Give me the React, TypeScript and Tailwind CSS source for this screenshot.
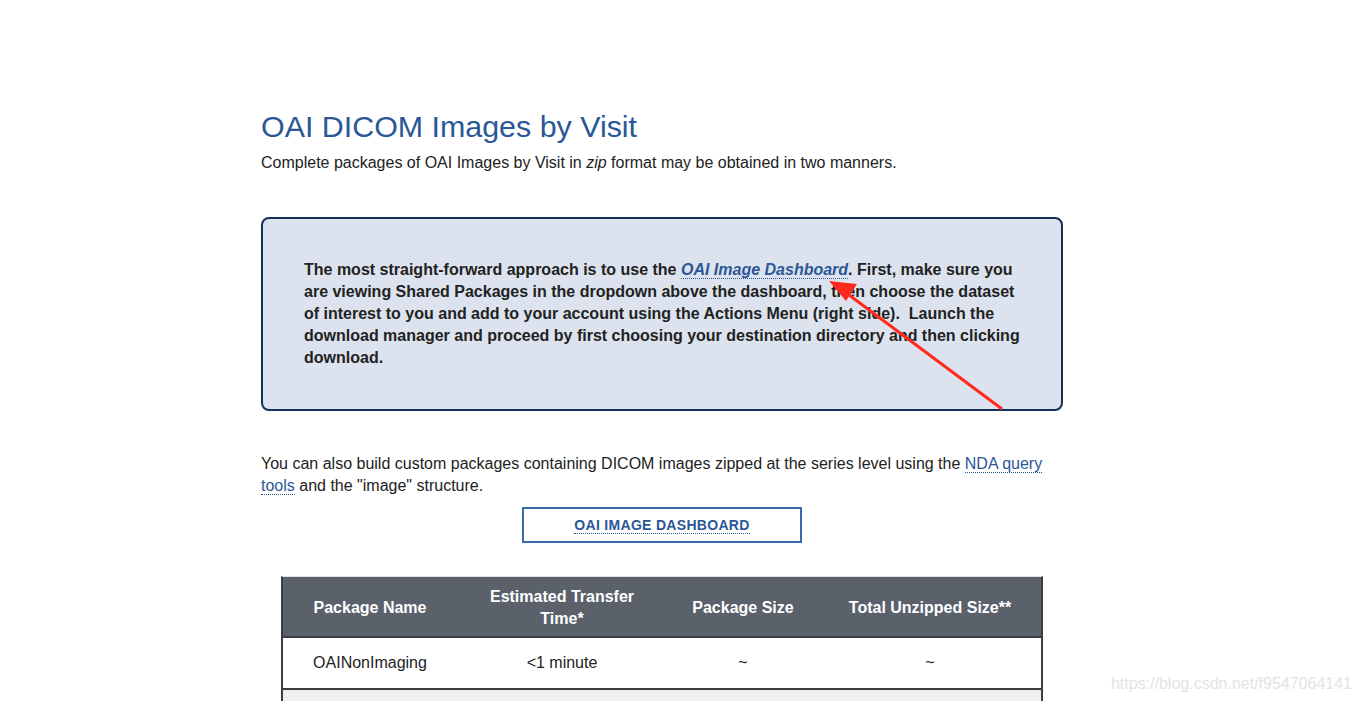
import React from "react";

const font = { fontFamily: '"Liberation Sans", Arial, sans-serif' };

function Arrow() {
  // red annotation arrow drawn over the info box
  return (
    <svg
      className="absolute left-0 top-0 pointer-events-none"
      width="1361"
      height="701"
      viewBox="0 0 1361 701"
    >
      <line x1="1002" y1="409" x2="845" y2="292" stroke="#ff2a1f" strokeWidth="3" />
      <polygon points="829,281 857,284 846,301" fill="#ff2a1f" />
    </svg>
  );
}

export default function App() {
  return (
    <div className="relative w-[1361px] h-[701px] overflow-hidden bg-white text-[#222]" style={font}>
      <div className="w-[802px] ml-[261px] pt-[110px]">
        <h1 className="text-[30.4px] leading-[33px] text-[#2b5797] font-normal">
          OAI DICOM Images by Visit
        </h1>
        <p className="mt-[9px] text-[16px] leading-[22px]">
          Complete packages of OAI Images by Visit in <i>zip</i> format may be obtained in two manners.
        </p>

        <div className="mt-[43px] border-2 border-[#142f58] rounded-[8px] bg-[#dce3ee] px-[41px] py-[40px]">
          <p className="text-[16px] leading-[22px] font-bold text-[#222]">
            The most straight-forward approach is to use the{" "}
            <a className="italic text-[#2b5797] border-b border-dotted border-[#2b5797]">
              OAI Image Dashboard
            </a>
            . First, make sure you are viewing Shared Packages in the dropdown above the dashboard, then choose
            the dataset of interest to you and add to your account using the Actions Menu (right side).&nbsp; Launch
            the download manager and proceed by first choosing your destination directory and then clicking
            download.
          </p>
        </div>

        <p className="mt-[42px] text-[16px] leading-[22px]">
          You can also build custom packages containing DICOM images zipped at the series level using the{" "}
          <a className="text-[#2b5797] border-b border-dotted border-[#2b5797]">NDA query tools</a> and the
          "image" structure.
        </p>

        <div className="mt-[10px] flex justify-center">
          <button className="w-[280px] h-[36px] border-2 border-[#3d6ba8] bg-white flex items-center justify-center">
            <span className="text-[14px] tracking-[0.3px] font-bold uppercase text-[#2b5797] border-b border-dotted border-[#2b5797] leading-[16px]">
              OAI Image Dashboard
            </span>
          </button>
        </div>

        <div className="mt-[33px] mx-[20px] border-x-2 border-t border-x-[#3a3d42] border-t-[#e2e2e2]">
          <div className="grid grid-cols-[174px_210px_152px_1fr] bg-[#5a616b] text-white font-bold text-[16px] leading-[22px] h-[61px] pt-[2px] items-center text-center border-b-2 border-[#3a3d42]">
            <div>Package Name</div>
            <div>
              Estimated Transfer
              <br />
              Time*
            </div>
            <div>Package Size</div>
            <div>Total Unzipped Size**</div>
          </div>
          <div className="grid grid-cols-[174px_210px_152px_1fr] h-[52px] items-center text-center text-[16px] border-b-2 border-[#3a3d42]">
            <div>OAINonImaging</div>
            <div>&lt;1 minute</div>
            <div>~</div>
            <div>~</div>
          </div>
          <div className="h-[60px] bg-[#f0f0f0]" />
        </div>
      </div>

      <Arrow />

      <div className="absolute right-[9px] bottom-[5px] text-[16px] text-[#e3e3e3]">
        https://blog.csdn.net/f9547064141
      </div>
    </div>
  );
}
